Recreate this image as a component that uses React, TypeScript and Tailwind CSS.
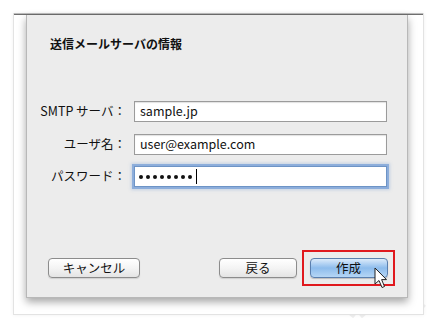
import React from "react";

const FONT = {
  fontFamily: '"Noto Sans CJK JP", "Noto Sans", sans-serif',
};

const ROWS = [
  { label: "SMTP サーバ：", value: "sample.jp" },
  { label: "ユーザ名：", value: "user@example.com" },
];

function Cursor() {
  return (
    <svg
      viewBox="0 0 14 22"
      className="pointer-events-none absolute left-[374px] top-[267px] h-[22px] w-[14px]"
    >
      <path
        d="M1 1 L1 17 L5 13.5 L8 20.5 L10.5 19.5 L7.6 12.6 L12.5 12.6 Z"
        fill="#ffffff"
        stroke="#222"
        strokeWidth="1"
        strokeLinejoin="round"
      />
    </svg>
  );
}

function MacButton({
  children,
  width,
  primary,
}: {
  children: React.ReactNode;
  width: string;
  primary?: boolean;
}) {
  return (
    <div
      className={
        primary
          ? `${width} flex h-[20px] items-center justify-center rounded-[4px] border border-[#5a7fae] bg-gradient-to-b from-[#dcebfa] via-[#8dbcec] to-[#b5d6f5] text-[12.5px] text-[#111] shadow-[0_1px_1px_rgba(0,0,0,0.2)]`
          : `${width} flex h-[20px] items-center justify-center rounded-[4px] border border-[#8c8c8c] bg-gradient-to-b from-[#ffffff] via-[#f4f4f4] to-[#e4e4e4] text-[12.5px] text-[#111] shadow-[0_1px_1px_rgba(0,0,0,0.12)]`
      }
    >
      {children}
    </div>
  );
}

export default function App() {
  return (
    <div
      className="relative h-[324px] w-[435px] overflow-hidden bg-white"
      style={FONT}
    >
      {/* faint background lines */}
      <svg
        viewBox="0 0 435 324"
        className="pointer-events-none absolute inset-0 h-[324px] w-[435px]"
      >
        <g stroke="#efefef" strokeWidth="6" fill="none">
          <path d="M330 296 L355 316" />
          <path d="M360 316 L400 282" />
          <path d="M398 286 L424 308" />
        </g>
      </svg>

      <div className="relative pl-[13px] pt-[13px]">
        {/* outer window */}
        <div className="flex h-[302px] w-[411px] flex-col border border-t-0 border-[#e3e3e3] bg-white shadow-[0_0_4px_rgba(0,0,0,0.06)]">
          <div className="h-[1px] bg-[#bdbdbd]" />
          <div className="h-[1px] bg-[#6f6f6f]" />

          {/* sheet */}
          <div className="ml-[12px] flex h-[283px] w-[382px] flex-col border-x border-b border-[#b8b8b8] bg-[#ececec] shadow-[0_4px_8px_rgba(0,0,0,0.35)]">
            <div className="pl-[23px] pt-[20px] text-[12px] font-bold text-[#111]">
              送信メールサーバの情報
            </div>

            <div className="mt-[48px] flex flex-col gap-[11.5px]">
              {ROWS.map((r) => (
                <div key={r.label} className="flex items-center">
                  <div className="w-[99px] text-right text-[12.5px] text-[#111]">
                    {r.label}
                  </div>
                  <div className="ml-[8px] flex h-[21px] w-[253px] items-center border border-[#9b9b9b] bg-white pl-[5px] text-[12.5px] text-[#111] shadow-[inset_0_1px_1px_rgba(0,0,0,0.12)]">
                    {r.value}
                  </div>
                </div>
              ))}
              <div className="flex items-center">
                <div className="w-[99px] text-right text-[12.5px] text-[#111]">
                  パスワード：
                </div>
                <div className="ml-[8px] flex h-[21px] w-[253px] items-center gap-[3px] border border-[#6d94c6] bg-white pl-[4px] shadow-[0_0_0_2px_rgba(120,160,215,0.75),0_0_3px_3px_rgba(120,160,215,0.35)]">
                  {Array.from({ length: 8 }).map((_, i) => (
                    <span key={i} className="h-[4px] w-[4px] rounded-full bg-[#111]" />
                  ))}
                  <span className="ml-[1px] h-[15px] w-[1px] bg-black" />
                </div>
              </div>
            </div>

            <div className="mt-auto flex items-center pb-[11px] pl-[21px] pr-[12px]">
              <MacButton width="w-[92px]">キャンセル</MacButton>
              <div className="flex-1" />
              <MacButton width="w-[78px]">戻る</MacButton>
              <div className="ml-[5px] flex h-[36px] w-[93px] items-center justify-center border-2 border-[#e0191e]">
                <MacButton width="w-[78px]" primary>
                  作成
                </MacButton>
              </div>
            </div>
          </div>
        </div>
      </div>

      <Cursor />
    </div>
  );
}
